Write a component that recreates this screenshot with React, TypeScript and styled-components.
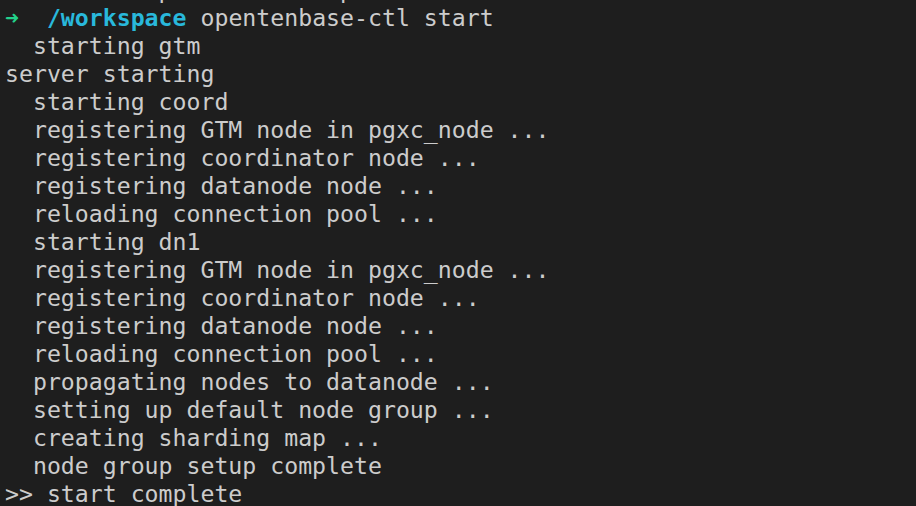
import React from "react";
import styled, { createGlobalStyle } from "styled-components";

const Global = createGlobalStyle`
  html, body {
    margin: 0;
    padding: 0;
    background: #1e1e1e;
    overflow: hidden;
  }
`;

const Terminal = styled.div`
  width: 916px;
  height: 506px;
  background: #1e1e1e;
  overflow: hidden;
  box-sizing: border-box;
  padding-left: 5px;
`;

const Scroll = styled.div`
  margin-top: -24px;
  display: flex;
  flex-direction: column;
`;

const Line = styled.div`
  font-family: "DejaVu Sans Mono", Menlo, monospace;
  font-size: 23.2px;
  line-height: 28px;
  height: 28px;
  color: #cccccc;
  white-space: pre;
`;

const Arrow = styled.span`
  color: #23d18b;
  font-weight: bold;
`;

const Dir = styled.span`
  color: #29b8db;
  font-weight: bold;
`;

const output = [
  "  starting gtm",
  "server starting",
  "  starting coord",
  "  registering GTM node in pgxc_node ...",
  "  registering coordinator node ...",
  "  registering datanode node ...",
  "  reloading connection pool ...",
  "  starting dn1",
  "  registering GTM node in pgxc_node ...",
  "  registering coordinator node ...",
  "  registering datanode node ...",
  "  reloading connection pool ...",
  "  propagating nodes to datanode ...",
  "  setting up default node group ...",
  "  creating sharding map ...",
  "  node group setup complete",
  ">> start complete",
];

export default function App() {
  return (
    <>
      <Global />
      <Terminal>
        <Scroll>
          <Line>{"           p            p"}</Line>
          <Line>
            <Arrow>➜</Arrow>
            {"  "}
            <Dir>/workspace</Dir>
            {" opentenbase-ctl start"}
          </Line>
          {output.map((t, i) => (
            <Line key={i}>{t}</Line>
          ))}
        </Scroll>
      </Terminal>
    </>
  );
}
